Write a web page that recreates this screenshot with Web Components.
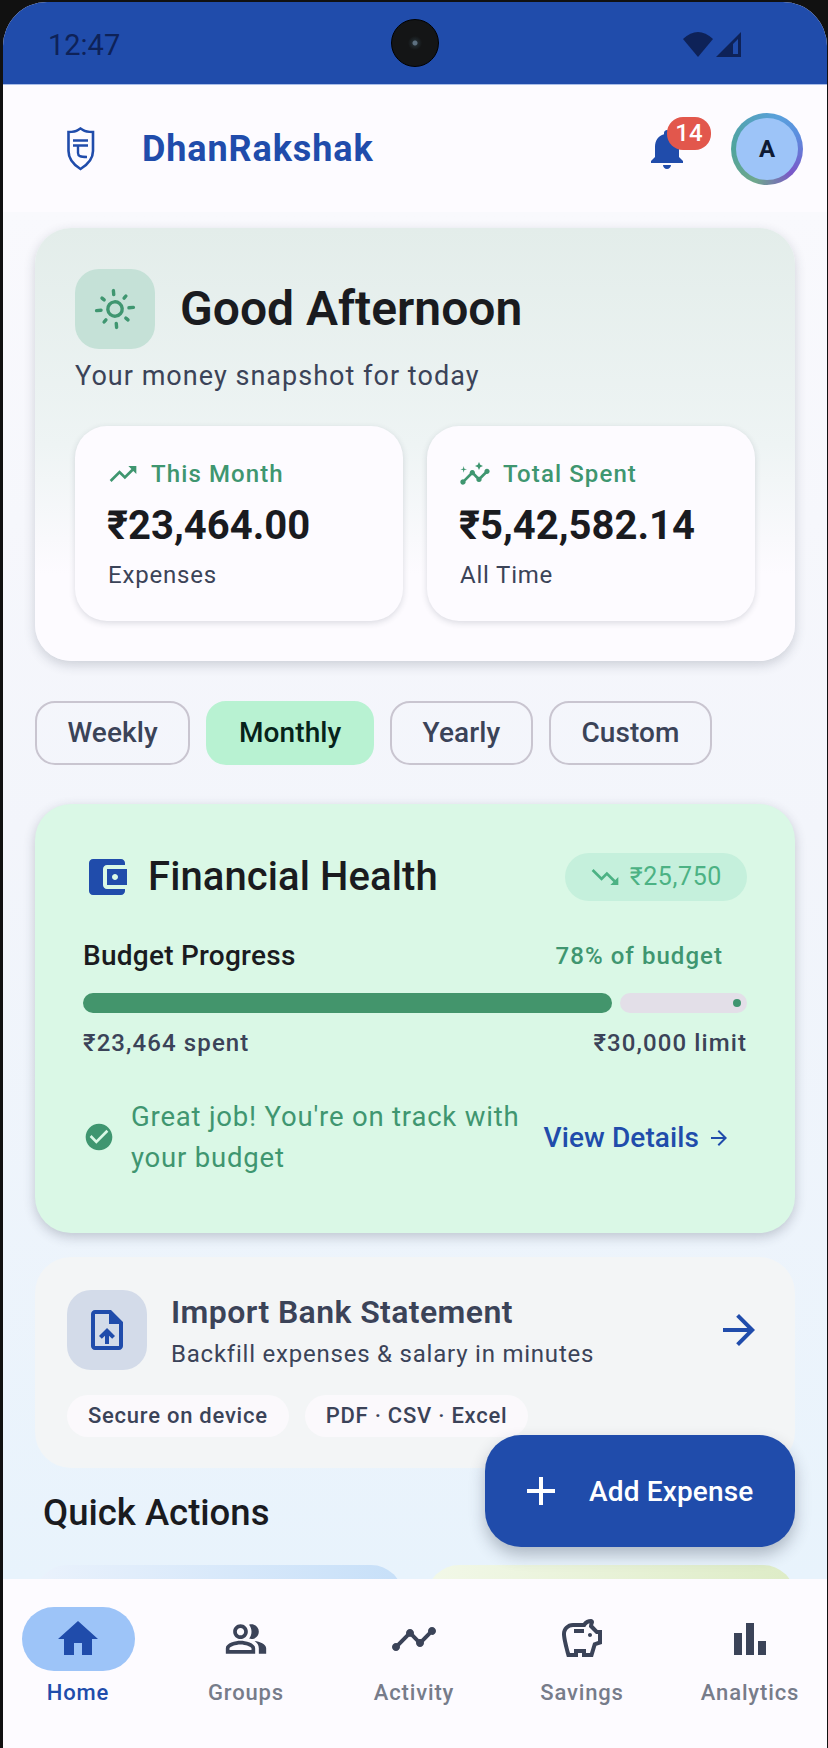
<!DOCTYPE html>
<html>
<head>
<meta charset="utf-8">
<title>DhanRakshak</title>
<style>
  html, body { margin: 0; padding: 0; background: #111; }
  body { font-family: Roboto, "Noto Sans", sans-serif; width: 828px; height: 1748px; overflow: hidden; }
</style>
</head>
<body>
<app-shell>
  <status-bar slot="top"></status-bar>
  <app-header slot="top"></app-header>

  <hero-card></hero-card>
  <period-chips></period-chips>
  <health-card></health-card>
  <import-card></import-card>
  <quick-actions></quick-actions>

  <add-fab slot="over"></add-fab>
  <bottom-nav slot="bottom"></bottom-nav>
</app-shell>

<script>
  // material paths, kept in one place because several cards share them
  const ICONS = {
    bell: "M12 22c1.1 0 2-.9 2-2h-4c0 1.1.89 2 2 2zm6-6v-5c0-3.07-1.64-5.64-4.5-6.32V4c0-.83-.67-1.5-1.5-1.5s-1.5.67-1.5 1.5v.68C7.63 5.36 6 7.92 6 11v5l-2 2v1h16v-1l-2-2z",
    up: "M16 6l2.29 2.29-4.88 4.88-4-4L2 16.59 3.41 18l6-6 4 4 6.3-6.29L22 12V6z",
    down: "M16 18l2.29-2.29-4.88-4.88-4 4L2 7.41 3.41 6l6 6 4-4 6.3 6.29L22 12v6z",
    insights: "M21 8c-1.45 0-2.26 1.44-1.93 2.51l-3.55 3.56c-.3-.09-.74-.09-1.04 0l-2.55-2.55C12.27 10.45 11.46 9 10 9c-1.45 0-2.27 1.44-1.93 2.52l-4.56 4.55C2.44 15.74 1 16.55 1 18c0 1.1.9 2 2 2 1.45 0 2.26-1.44 1.93-2.51l4.55-4.56c.3.09.74.09 1.04 0l2.55 2.55C12.73 16.61 13.54 18 15 18c1.45 0 2.27-1.44 1.93-2.52l3.56-3.55c1.07.33 2.51-.48 2.51-1.93 0-1.1-.9-2-2-2zM15 9l.94-2.07L18 6l-2.06-.93L15 3l-.92 2.07L12 6l2.08.93zM3.5 11L4 9l2-.5L4 8l-.5-2L3 8l-2 .5L3 9z",
    wallet: "M21 18v1c0 1.1-.9 2-2 2H5c-1.11 0-2-.9-2-2V5c0-1.1.89-2 2-2h14c1.1 0 2 .9 2 2v1h-9c-1.11 0-2 .9-2 2v8c0 1.1.89 2 2 2h9zm-9-2h10V8H12v8zm4-2.5c-.83 0-1.5-.67-1.5-1.5s.67-1.5 1.5-1.5 1.5.67 1.5 1.5-.67 1.5-1.5 1.5z",
    check: "M12 2C6.48 2 2 6.48 2 12s4.48 10 10 10 10-4.48 10-10S17.52 2 12 2zm-2 15l-5-5 1.41-1.41L10 14.17l7.59-7.59L19 8l-9 9z",
    upload: "M14 2H6c-1.1 0-1.99.9-1.99 2L4 20c0 1.1.89 2 1.99 2H18c1.1 0 2-.9 2-2V8l-6-6zm4 18H6V4h7v5h5v11zM8 15.01l1.41 1.41L11 14.84V19h2v-4.16l1.59 1.59L16 15.01 12.01 11z",
    arrow: "M12 4l-1.41 1.41L16.17 11H4v2h12.17l-5.58 5.59L12 20l8-8z",
    add: "M19 13h-6v6h-2v-6H5v-2h6V5h2v6h6v2z",
    home: "M10 20v-6h4v6h5v-8h3L12 3 2 12h3v8z",
    groups: "M16.67 13.13C18.04 14.06 19 15.32 19 17v3h4v-3c0-2.18-3.57-3.47-6.33-3.87zM15 12c2.21 0 4-1.79 4-4s-1.79-4-4-4c-.47 0-.91.1-1.33.24C14.5 5.27 15 6.58 15 8s-.5 2.73-1.33 3.76c.42.14.86.24 1.33.24zM9 12c2.21 0 4-1.79 4-4s-1.79-4-4-4-4 1.79-4 4 1.79 4 4 4zm0-6c1.1 0 2 .9 2 2s-.9 2-2 2-2-.9-2-2 .9-2 2-2zM9 13c-2.67 0-8 1.34-8 4v3h16v-3c0-2.66-5.33-4-8-4zm6 5H3v-.99C3.2 16.29 6.3 15 9 15s5.8 1.29 6 2v1z",
    activity: "M23 8c0 1.1-.9 2-2 2-.18 0-.35-.02-.51-.07l-3.56 3.55c.05.16.07.34.07.52 0 1.1-.9 2-2 2s-2-.9-2-2c0-.18.02-.36.07-.52l-2.55-2.55c-.16.05-.34.07-.52.07s-.36-.02-.52-.07l-4.55 4.56c.05.16.07.33.07.51 0 1.1-.9 2-2 2s-2-.9-2-2 .9-2 2-2c.18 0 .35.02.51.07l4.56-4.55C8.02 9.36 8 9.18 8 9c0-1.1.9-2 2-2s2 .9 2 2c0 .18-.02.36-.07.52l2.55 2.55c.16-.05.34-.07.52-.07s.36.02.52.07l3.55-3.56C19.02 8.35 19 8.18 19 8c0-1.1.9-2 2-2s2 .9 2 2z",
    savings: "M15 10c0-.55.45-1 1-1s1 .45 1 1-.45 1-1 1-1-.45-1-1zM8 9h5V7H8v2zm14-1.5v6.97l-2.82.94L17.5 21H12v-2h-2v2H4.5S2 12.54 2 9.5 4.46 4 7.5 4h5c.91-1.21 2.36-2 4-2 .83 0 1.5.67 1.5 1.5 0 .21-.04.4-.12.58-.14.32-.26.69-.32 1.09l2.27 2.27L22 7.5zm-2 2h-1L15.5 6c0-.65.09-1.29.26-1.91-.97.25-1.76.97-2.09 1.91H7.5C5.57 6 4 7.57 4 9.5c0 1.88 1.22 6.65 2.01 9.5H8v-2h6v2h2.01l1.55-5.15 2.44-.82V9.5z",
    bars: "M4 9h4v11H4zM10 4h4v16h-4zM16 13h4v7h-4z"
  };

  class AppIcon extends HTMLElement {
    connectedCallback() {
      const size = this.getAttribute("size") || 24;
      const d = ICONS[this.getAttribute("name")] || "";
      this.attachShadow({ mode: "open" }).innerHTML = `
        <style>:host { display: block; width: ${size}px; height: ${size}px; flex: none; color: inherit; } svg { display: block; }</style>
        <svg width="${size}" height="${size}" viewBox="0 0 24 24" fill="currentColor"><path d="${d}"/></svg>`;
    }
  }
  customElements.define("app-icon", AppIcon);

  class AppShell extends HTMLElement {
    constructor() {
      super();
      this.attachShadow({ mode: "open" }).innerHTML = `
        <style>
          :host { display: block; width: 828px; height: 1748px; box-sizing: border-box; padding: 2px 1px 0 3px; background: #111; }
          .screen { position: relative; height: 100%; display: flex; flex-direction: column; overflow: hidden;
            border-radius: 44px 44px 0 0; background: #fdfbff; }
          main { flex: 1; min-height: 0; overflow: hidden; box-sizing: border-box; padding: 16px 32px 0;
            display: flex; flex-direction: column;
            background: linear-gradient(180deg, #f9f9fd 0%, #f3f5fb 45%, #e8f3fc 100%); }
        </style>
        <div class="screen">
          <slot name="top"></slot>
          <main><slot></slot></main>
          <slot name="bottom"></slot>
          <slot name="over"></slot>
        </div>`;
    }
  }
  customElements.define("app-shell", AppShell);

  class StatusBar extends HTMLElement {
    constructor() {
      super();
      this.attachShadow({ mode: "open" }).innerHTML = `
        <style>
          :host { display: block; height: 83px; background: #204cab; border-bottom: 1px solid #a9bde8; box-sizing: border-box; position: relative; }
          .row { height: 100%; display: flex; align-items: center; justify-content: space-between; padding: 0 86px 0 45px; box-sizing: border-box; }
          .time { font: 400 29px Roboto, sans-serif; color: #0e2258; position: relative; top: 2px; }
          .cam { position: absolute; left: 388px; top: 17px; width: 48px; height: 48px; border-radius: 50%;
            background: radial-gradient(circle, #5d7080 0 2px, #20282c 3px, #141516 7px, #141516 100%); border: 1px solid #000; box-sizing: border-box; }
          svg { display: block; position: relative; top: 1px; }
        </style>
        <div class="row">
          <span class="time">12:47</span>
          <svg width="58" height="25" viewBox="0 0 58 25" fill="#0e2258">
            <path d="M0 7 Q15 -7 30 7 L15 25 Z"/>
            <path d="M33 25 L58 0 V25 Z M50 22 h5 V7 l-5 5 Z" fill-rule="evenodd"/>
          </svg>
        </div>
        <div class="cam"></div>`;
    }
  }
  customElements.define("status-bar", StatusBar);

  class AppHeader extends HTMLElement {
    constructor() {
      super();
      this.attachShadow({ mode: "open" }).innerHTML = `
        <style>
          :host { display: flex; align-items: center; height: 127px; background: #fdfbff; box-sizing: border-box; padding: 0 24px 0 64px; }
          .title { margin-left: 47px; font: 700 36px Roboto, sans-serif; color: #204cab; letter-spacing: .9px; flex: 1; }
          .bell { position: relative; width: 48px; height: 48px; color: #204cab; margin-right: 40px; }
          .badge { position: absolute; left: 24px; top: -8px; width: 44px; height: 33px; border-radius: 16px; background: #e2574c; color: #fff;
            font: 500 24px/33px Roboto, sans-serif; text-align: center; }
          .avatar { width: 72px; height: 72px; box-sizing: border-box; padding: 5px; border-radius: 50%;
            background: conic-gradient(from 200deg, #6fa78c, #4fa49c 20%, #5aa0dc 50%, #5b8fdf 62%, #7a57c8 82%, #6fa78c); }
          .avatar span { display: block; height: 100%; border-radius: 50%; background: #9dc4f8; color: #0e1a33;
            font: 700 24px/62px Roboto, sans-serif; text-align: center; }
          svg { display: block; }
        </style>
        <svg width="28" height="44" viewBox="0 0 28 44" fill="none" stroke="#204cab" stroke-width="2.6">
          <path d="M13.5 1.5 L16 3 C18 4.5 22 5 26 5 V24 C26 32 20 38 13.5 42 C7 38 1.5 32 1.5 24 V5 C5 5 9 4.5 11 3 Z"/>
          <path d="M6 13.5 H21 M6 18.5 H21 M11 18.5 V26 C11 29 13 30 20 30" stroke-width="2.4"/>
        </svg>
        <span class="title">DhanRakshak</span>
        <div class="bell"><app-icon name="bell" size="48"></app-icon><span class="badge">14</span></div>
        <div class="avatar"><span>A</span></div>`;
    }
  }
  customElements.define("app-header", AppHeader);

  class StatCard extends HTMLElement {
    connectedCallback() {
      this.attachShadow({ mode: "open" }).innerHTML = `
        <style>
          :host { display: block; box-sizing: border-box; height: 195px; border-radius: 32px; background: #fdfbff; padding: 32px 32px 0;
            box-shadow: 0 2px 6px rgba(40,50,70,.16); }
          .label { display: flex; align-items: center; gap: 12px; font: 500 24px/32px Roboto, sans-serif; letter-spacing: 1.1px; color: #3f9670; }
          .value { font: 700 40px/54px Roboto, sans-serif; color: #1a1b1f; margin-top: 9px; }
          .sub { font: 400 24px/32px Roboto, sans-serif; letter-spacing: .8px; color: #3b4358; margin-top: 6px; padding-left: 1px; }
        </style>
        <div class="label"><app-icon name="${this.getAttribute("icon")}" size="32"></app-icon>${this.getAttribute("label")}</div>
        <div class="value">${this.getAttribute("value")}</div>
        <div class="sub">${this.getAttribute("sub")}</div>`;
    }
  }
  customElements.define("stat-card", StatCard);

  class HeroCard extends HTMLElement {
    constructor() {
      super();
      this.attachShadow({ mode: "open" }).innerHTML = `
        <style>
          :host { display: block; flex: none; height: 433px; box-sizing: border-box; border-radius: 36px; padding: 41px 40px 0;
            background: linear-gradient(180deg, #e3edea 0%, #eef4f4 50%, #fdfbff 80%);
            box-shadow: 0 4px 12px rgba(40,50,70,.2); }
          .top { display: flex; align-items: center; gap: 25px; }
          .sun { width: 80px; height: 80px; border-radius: 24px; background: #c5e1d7; display: flex; align-items: center; justify-content: center; }
          h1 { margin: 0; font: 600 48px/60px Roboto, sans-serif; color: #1a1b1f; }
          p { margin: 7px 0 0; font: 400 27px/40px Roboto, sans-serif; letter-spacing: 1.03px; color: #3b4358; }
          .grid { display: grid; grid-template-columns: 328px 328px; gap: 24px; margin-top: 30px; }
        </style>
        <div class="top">
          <div class="sun">
            <svg width="44" height="44" viewBox="0 0 44 44" fill="none" stroke="#3f9670" stroke-width="3.4" stroke-linecap="round">
              <g transform="rotate(-5 22 22)">
                <circle cx="22" cy="22" r="7.2"/>
                <path d="M22 3.5v4M22 36.5v4M3.5 22H8M36 22h4.5M10 10l2 2M32 32l2 2M10 34l2-2M32 12l2-2"/>
              </g>
            </svg>
          </div>
          <h1>Good Afternoon</h1>
        </div>
        <p>Your money snapshot for today</p>
        <div class="grid">
          <stat-card icon="up" label="This Month" value="₹23,464.00" sub="Expenses"></stat-card>
          <stat-card icon="insights" label="Total Spent" value="₹5,42,582.14" sub="All Time"></stat-card>
        </div>`;
    }
  }
  customElements.define("hero-card", HeroCard);

  class PeriodChips extends HTMLElement {
    constructor() {
      super();
      this.attachShadow({ mode: "open" }).innerHTML = `
        <style>
          :host { display: flex; flex: none; gap: 16.2px; margin-top: 40px; }
          span { box-sizing: border-box; height: 64px; border: 2px solid #c9c5d0; border-radius: 20px; padding: 0 30.5px;
            font: 500 28px/60px Roboto, sans-serif; letter-spacing: .1px; color: #3b4358; text-align: center; }
          .on { background: #b8f2d2; border-color: #b8f2d2; color: #06231a; }
        </style>
        <span>Weekly</span><span class="on">Monthly</span><span>Yearly</span><span>Custom</span>`;
    }
  }
  customElements.define("period-chips", PeriodChips);

  class HealthCard extends HTMLElement {
    constructor() {
      super();
      this.attachShadow({ mode: "open" }).innerHTML = `
        <style>
          :host { display: block; flex: none; height: 429px; margin-top: 39px; box-sizing: border-box; border-radius: 36px; background: #daf8e6;
            padding: 49px 48px 0; box-shadow: 0 4px 12px rgba(40,50,70,.24); color: #1a1b1f; }
          .head { display: flex; align-items: center; height: 48px; }
          .head > app-icon { color: #204cab; margin-right: 17px; }
          h2 { margin: 0; flex: 1; font: 500 40px/48px Roboto, sans-serif; letter-spacing: .1px; }
          .pill { display: flex; align-items: center; gap: 9px; height: 48px; padding: 0 25px 0 24px; border-radius: 24px; background: #c5f0dc;
            font: 400 25px/48px Roboto, sans-serif; letter-spacing: .6px; color: #4cb284; }
          .row { display: flex; justify-content: space-between; align-items: center; }
          .budget { margin-top: 35px; height: 40px; font: 500 28px/40px Roboto, sans-serif; letter-spacing: .25px; }
          .budget b { font: 500 24px/40px Roboto, sans-serif; letter-spacing: 1.05px; color: #3f9670; margin-right: 24px; }
          .bar { display: flex; gap: 8px; height: 20px; margin-top: 17px; }
          .fill { width: 529px; background: #43956c; border-radius: 10px; }
          .track { flex: 1; background: #e3dfe8; border-radius: 10px; position: relative; }
          .track i { position: absolute; right: 6px; top: 6px; width: 8px; height: 8px; border-radius: 50%; background: #3f9670; }
          .limits { margin-top: 10px; height: 40px; font: 500 24px/40px Roboto, sans-serif; letter-spacing: 1.1px; color: #3b4358; }
          .ok { display: flex; align-items: center; margin-top: 33px; }
          .ok > app-icon { color: #3f9670; margin-right: 16px; }
          .msg { width: 400px; font: 400 27.5px/41px Roboto, sans-serif; letter-spacing: .8px; color: #3f9670; }
          .link { margin-left: auto; margin-right: 16px; padding-top: 2px; display: flex; align-items: center; gap: 8px; font: 500 28px/40px Roboto, sans-serif; letter-spacing: .1px; color: #204cab; }
        </style>
        <div class="head">
          <app-icon name="wallet" size="48"></app-icon>
          <h2>Financial Health</h2>
          <div class="pill"><app-icon name="down" size="32"></app-icon>₹25,750</div>
        </div>
        <div class="row budget"><span>Budget Progress</span><b>78% of budget</b></div>
        <div class="bar"><div class="fill"></div><div class="track"><i></i></div></div>
        <div class="row limits"><span>₹23,464 spent</span><span>₹30,000 limit</span></div>
        <div class="ok">
          <app-icon name="check" size="32"></app-icon>
          <div class="msg">Great job! You're on track with your budget</div>
          <div class="link">View Details <app-icon name="arrow" size="24"></app-icon></div>
        </div>`;
    }
  }
  customElements.define("health-card", HealthCard);

  class ImportCard extends HTMLElement {
    constructor() {
      super();
      this.attachShadow({ mode: "open" }).innerHTML = `
        <style>
          :host { display: block; flex: none; height: 211px; margin-top: 24px; box-sizing: border-box; border-radius: 36px; background: #f3f5f6; padding: 33px 32px 0; }
          .top { display: flex; align-items: center; gap: 24px; height: 80px; }
          .ico { width: 80px; height: 80px; border-radius: 24px; background: #d3dbe9; color: #204cab; display: flex; align-items: center; justify-content: center; }
          .txt { flex: 1; padding-top: 4px; }
          h3 { margin: 0 0 4px; font: 600 32px/40px Roboto, sans-serif; letter-spacing: .4px; color: #3b4358; }
          .txt div { font: 400 24px/36px Roboto, sans-serif; letter-spacing: .78px; color: #3b4358; }
          .go { color: #204cab; }
          .tags { display: flex; gap: 16px; margin-top: 25px; }
          .tags span { height: 42px; padding: 0 21px; border-radius: 21px; background: #fbf9fc; font: 500 22px/42px Roboto, sans-serif; letter-spacing: .75px; color: #3b4358; }
        </style>
        <div class="top">
          <div class="ico"><app-icon name="upload" size="48"></app-icon></div>
          <div class="txt"><h3>Import Bank Statement</h3><div>Backfill expenses &amp; salary in minutes</div></div>
          <app-icon class="go" name="arrow" size="48"></app-icon>
        </div>
        <div class="tags"><span>Secure on device</span><span>PDF · CSV · Excel</span></div>`;
    }
  }
  customElements.define("import-card", ImportCard);

  class QuickActions extends HTMLElement {
    constructor() {
      super();
      this.attachShadow({ mode: "open" }).innerHTML = `
        <style>
          :host { display: block; flex: none; margin-top: 21px; }
          h3 { margin: 0 0 0 8px; font: 500 36.5px/48px Roboto, sans-serif; color: #1a1b1f; }
          .grid { display: grid; grid-template-columns: 368px 368px; gap: 24px; margin-top: 28px; }
          .grid div { height: 160px; border-radius: 32px; }
          .a { background: linear-gradient(100deg, #eaf2fc, #c4def8); }
          .b { background: linear-gradient(100deg, #f2f8e8, #dcebc4); }
        </style>
        <h3>Quick Actions</h3>
        <div class="grid"><div class="a"></div><div class="b"></div></div>`;
    }
  }
  customElements.define("quick-actions", QuickActions);

  class AddFab extends HTMLElement {
    constructor() {
      super();
      this.attachShadow({ mode: "open" }).innerHTML = `
        <style>
          :host { position: absolute; right: 32px; top: 1433px; width: 310px; height: 112px; box-sizing: border-box; border-radius: 36px;
            background: #204cab; color: #fff; display: flex; align-items: center; padding-left: 32px; gap: 24px;
            box-shadow: 0 8px 16px rgba(40,50,70,.3); font: 500 28px Roboto, sans-serif; letter-spacing: .15px; }
        </style>
        <app-icon name="add" size="48"></app-icon><span>Add Expense</span>`;
    }
  }
  customElements.define("add-fab", AddFab);

  class NavItem extends HTMLElement {
    connectedCallback() {
      const on = this.hasAttribute("active");
      const size = this.getAttribute("icon-size") || 48;
      this.attachShadow({ mode: "open" }).innerHTML = `
        <style>
          :host { display: flex; flex: none; flex-direction: column; align-items: center; width: 168px; }
          .pill { width: 113px; height: 64px; border-radius: 32px; display: flex; align-items: center; justify-content: center;
            color: ${on ? "#204cab" : "#3b4358"}; background: ${on ? "#9dc4f8" : "transparent"}; }
          .name { margin-top: 6px; font: 500 22px/32px Roboto, sans-serif; letter-spacing: .85px; color: ${on ? "#204cab" : "#777c8a"}; white-space: nowrap; }
        </style>
        <div class="pill"><app-icon name="${this.getAttribute("icon")}" size="${size}"></app-icon></div>
        <div class="name">${this.getAttribute("label")}</div>`;
    }
  }
  customElements.define("nav-item", NavItem);

  class BottomNav extends HTMLElement {
    constructor() {
      super();
      this.attachShadow({ mode: "open" }).innerHTML = `
        <style>
          :host { display: flex; flex: none; justify-content: center; height: 169px; box-sizing: border-box; padding-top: 28px; background: #fdfbff; margin: 0 -5px 0 -7px; }
        </style>
        <nav-item icon="home" label="Home" active></nav-item>
        <nav-item icon="groups" icon-size="44" label="Groups"></nav-item>
        <nav-item icon="activity" label="Activity"></nav-item>
        <nav-item icon="savings" label="Savings"></nav-item>
        <nav-item icon="bars" label="Analytics"></nav-item>`;
    }
  }
  customElements.define("bottom-nav", BottomNav);
</script>
</body>
</html>
